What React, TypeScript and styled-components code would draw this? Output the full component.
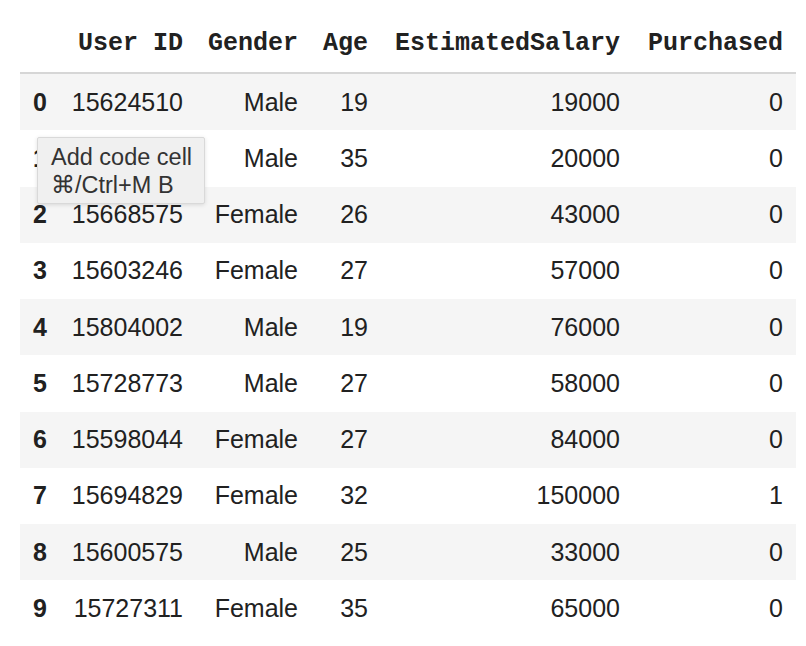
import React from "react";
import styled, { createGlobalStyle } from "styled-components";

const Global = createGlobalStyle`
  html, body { margin: 0; padding: 0; background: #ffffff; }
  body { font-family: "Liberation Sans", Arial, sans-serif; color: #212121; }
`;

const Page = styled.div`
  position: relative;
  padding: 14px 10px 0 20px;
`;

const Table = styled.table`
  border-collapse: collapse;
  border-spacing: 0;
  table-layout: fixed;
  width: 776px;
  font-family: "Liberation Sans", Arial, sans-serif;
  font-size: 25px;
  color: #212121;
`;

const HeadCell = styled.th`
  height: 58px;
  padding: 0 13px 0 0;
  text-align: right;
  vertical-align: middle;
  font-family: "Liberation Mono", "Courier New", monospace;
  font-weight: bold;
  font-size: 25px;
  border-bottom: 2px solid #d6d6d6;
  white-space: nowrap;
`;

const BodyRow = styled.tr<{ $striped: boolean }>`
  background: ${(p) => (p.$striped ? "#f5f5f5" : "#ffffff")};
`;

const IndexCell = styled.th`
  height: 56.25px;
  padding: 0 0 0 13px;
  text-align: left;
  vertical-align: middle;
  font-weight: bold;
`;

const Cell = styled.td`
  height: 56.25px;
  padding: 0 13px 0 0;
  text-align: right;
  vertical-align: middle;
  white-space: nowrap;
`;

const Tooltip = styled.div`
  position: absolute;
  left: 37px;
  top: 137px;
  width: 140px;
  padding: 5px 13px 4px 13px;
  background: #f0f0f0;
  border: 1px solid #d9d9d9;
  border-radius: 2px;
  box-shadow: 0 1px 4px rgba(0, 0, 0, 0.12);
  font-family: "Liberation Sans", Arial, sans-serif;
  font-size: 23.5px;
  line-height: 28px;
  color: #333333;
  white-space: nowrap;
`;

const cols = [38, 138, 115, 70, 252, 163];
const headers = ["", "User ID", "Gender", "Age", "EstimatedSalary", "Purchased"];

const rows: [string, string, string, string, string][] = [
  ["15624510", "Male", "19", "19000", "0"],
  ["15810944", "Male", "35", "20000", "0"],
  ["15668575", "Female", "26", "43000", "0"],
  ["15603246", "Female", "27", "57000", "0"],
  ["15804002", "Male", "19", "76000", "0"],
  ["15728773", "Male", "27", "58000", "0"],
  ["15598044", "Female", "27", "84000", "0"],
  ["15694829", "Female", "32", "150000", "1"],
  ["15600575", "Male", "25", "33000", "0"],
  ["15727311", "Female", "35", "65000", "0"],
];

export default function App() {
  return (
    <>
      <Global />
      <Page>
        <Table>
          <colgroup>
            {cols.map((w, i) => (
              <col key={i} style={{ width: w }} />
            ))}
          </colgroup>
          <thead>
            <tr>
              {headers.map((h, i) => (
                <HeadCell key={i}>{h}</HeadCell>
              ))}
            </tr>
          </thead>
          <tbody>
            {rows.map((r, i) => (
              <BodyRow key={i} $striped={i % 2 === 0}>
                <IndexCell>{i}</IndexCell>
                {r.map((v, j) => (
                  <Cell key={j}>{v}</Cell>
                ))}
              </BodyRow>
            ))}
          </tbody>
        </Table>
        <Tooltip>
          Add code cell
          <br />
          ⌘/Ctrl+M B
        </Tooltip>
      </Page>
    </>
  );
}
